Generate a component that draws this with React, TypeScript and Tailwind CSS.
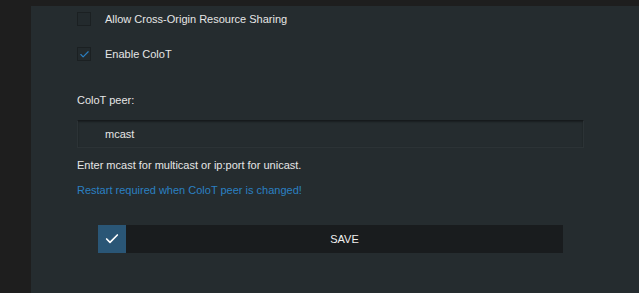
import { Check } from "lucide-react";

function Box({ checked }: { checked?: boolean }) {
  return (
    <span className="grid h-[14px] w-[14px] place-items-center border border-[#1b2022] bg-[#232a2d] shrink-0">
      {checked && <Check className="h-[11px] w-[11px] text-[#2b7fc1]" strokeWidth={2.5} />}
    </span>
  );
}

export default function App() {
  return (
    <div className="h-[293px] w-[639px] overflow-hidden bg-[#1e1e1e] pl-[31px] pt-[6px] font-['Liberation_Sans',Arial,sans-serif] text-[11px] text-[#e6e6e6]">
      <div className="h-full bg-[#252c2f] pl-[46px] pt-[6px]">
        <label className="flex h-[14px] items-center gap-[14px]">
          <Box />
          <span>Allow Cross-Origin Resource Sharing</span>
        </label>
        <label className="mt-[21px] flex h-[14px] items-center gap-[14px]">
          <Box checked />
          <span>Enable ColoT</span>
        </label>

        <div className="mt-[32px] leading-[14px]">ColoT peer:</div>

        <div className="mt-[13px] flex h-[28px] w-[507px] items-center border border-[#2c3336] border-t-[#161a1c] bg-[#252c2f] pl-[27px] shadow-[inset_0_1px_2px_rgba(0,0,0,0.35)]">
          mcast
        </div>

        <div className="mt-[10px] leading-[14px]">Enter mcast for multicast or ip:port for unicast.</div>
        <div className="mt-[11px] leading-[14px] text-[#2b80c2]">Restart required when ColoT peer is changed!</div>

        <button
          type="button"
          className="ml-[21px] mt-[28px] flex h-[28px] w-[465px] bg-[#191c1e] text-[11px] text-[#f0f0f0]"
        >
          <span className="grid h-[28px] w-[28px] place-items-center bg-[#2a5676]">
            <Check className="h-[16px] w-[16px] text-white" strokeWidth={2.5} />
          </span>
          <span className="flex flex-1 items-center justify-center">SAVE</span>
        </button>
      </div>
    </div>
  );
}
